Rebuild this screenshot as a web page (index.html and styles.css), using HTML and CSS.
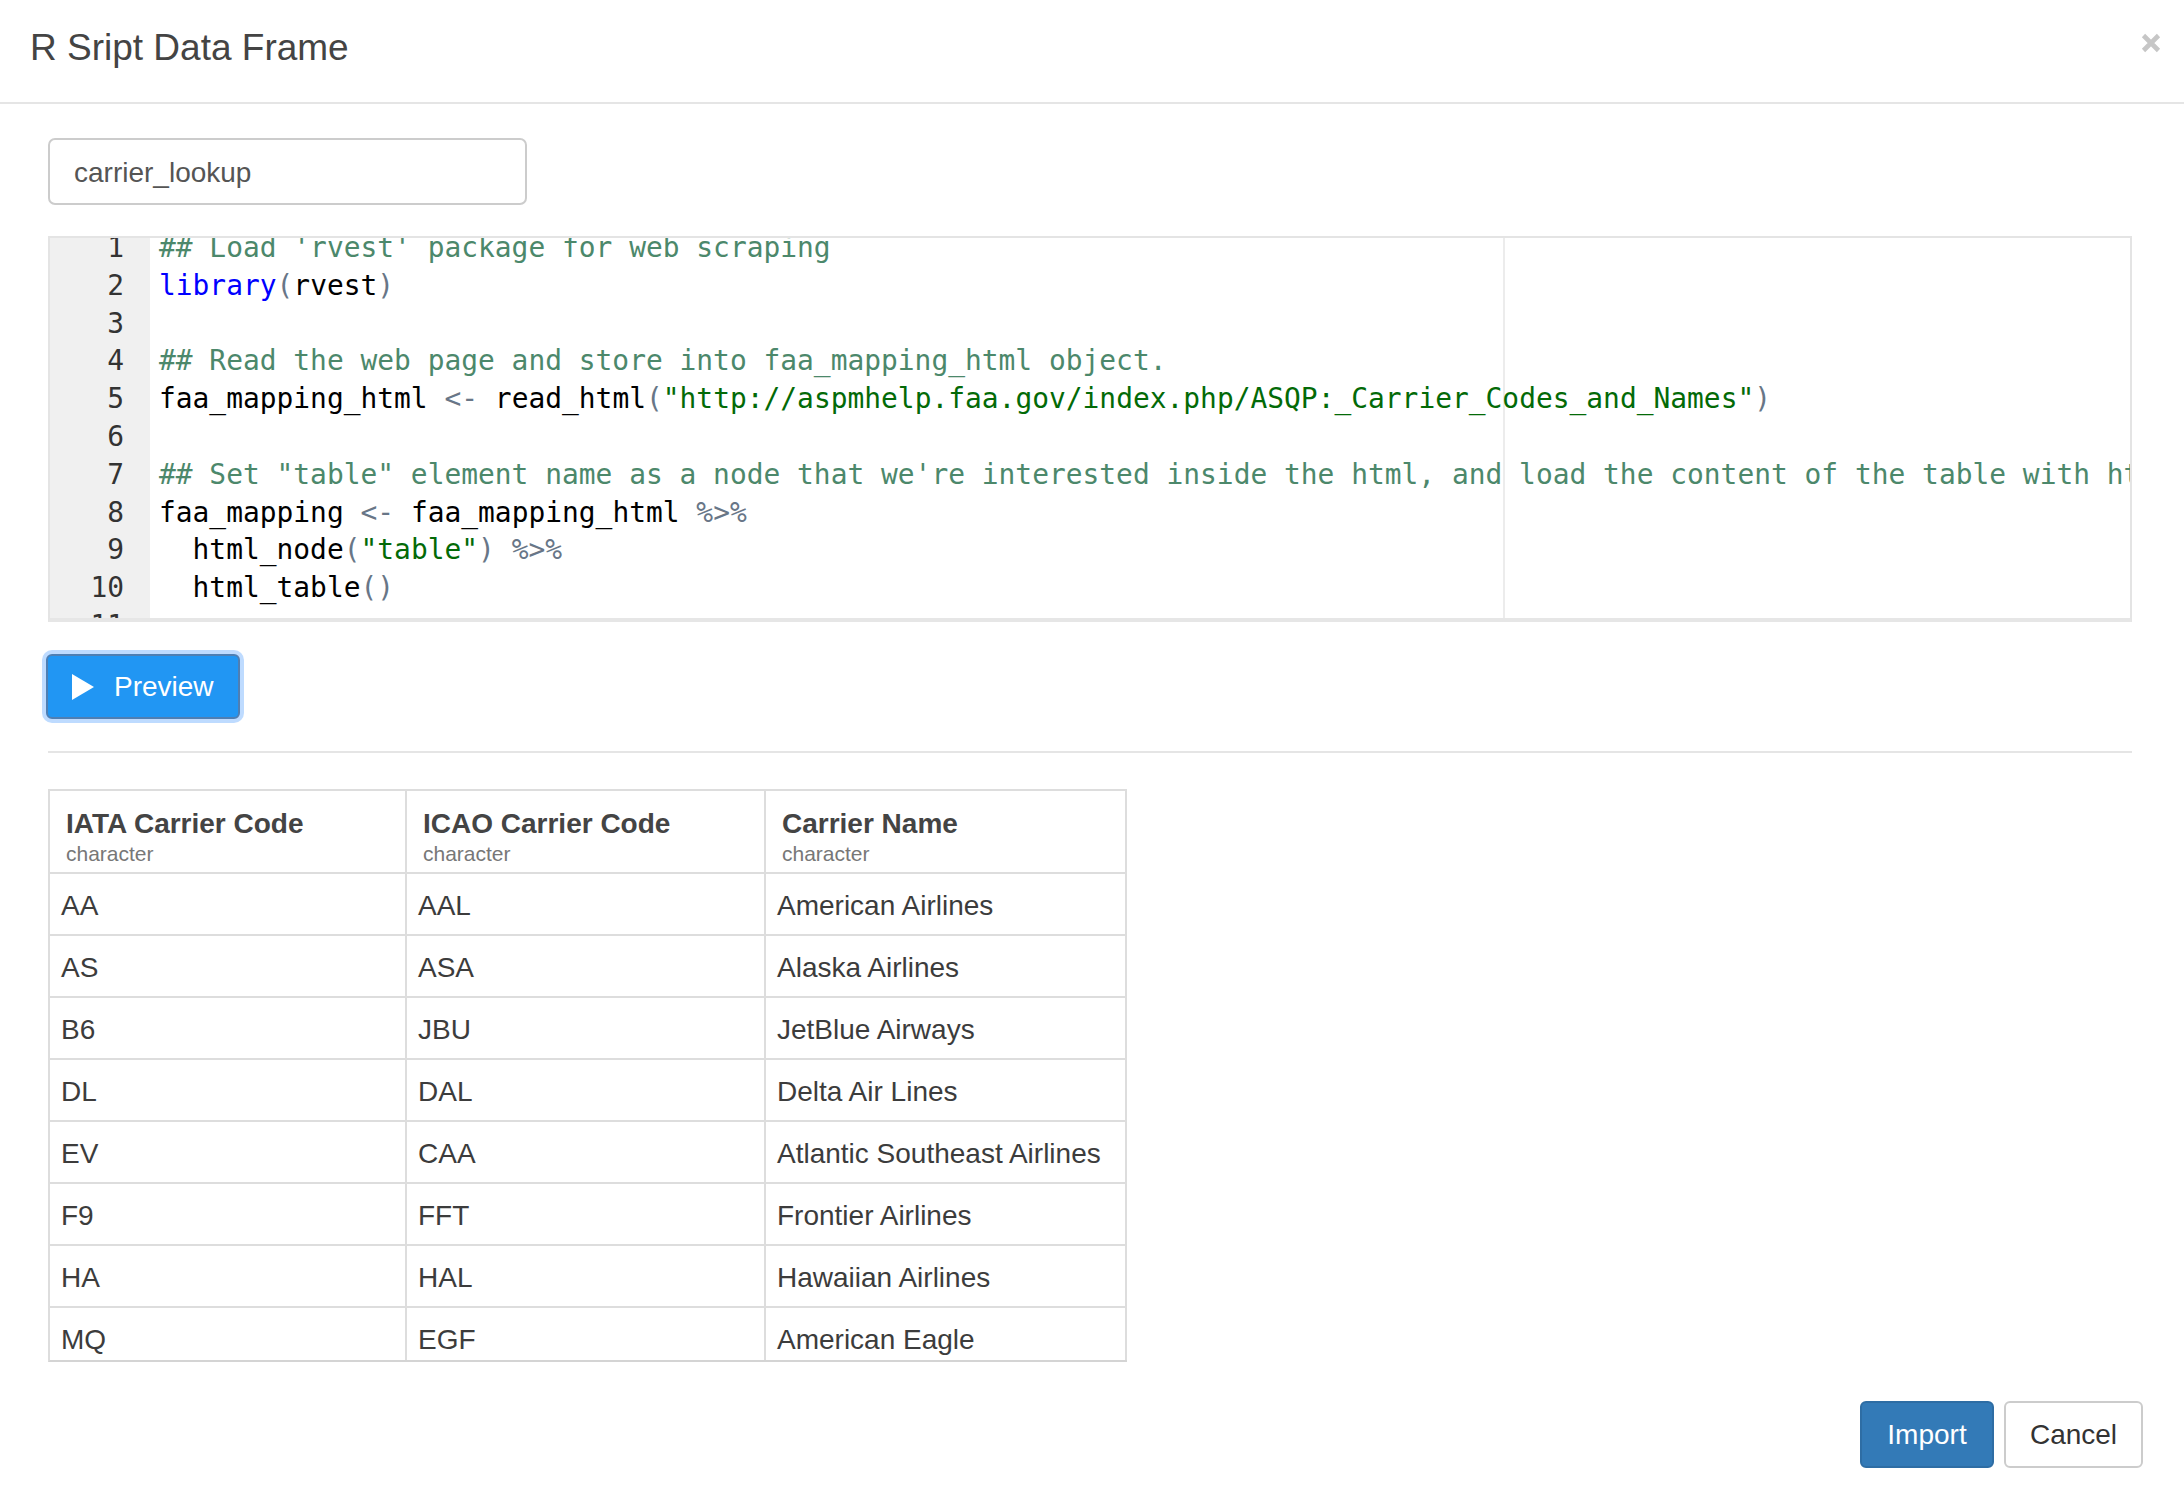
FILE: index.html
```html
<!DOCTYPE html>
<html lang="en">
<head>
<meta charset="utf-8">
<title>R Sript Data Frame</title>
<link rel="stylesheet" href="styles.css">
</head>
<body>
<div class="modal">
  <header class="modal-header">
    <h4 class="modal-title">R Sript Data Frame</h4>
    <button class="close" aria-label="Close">
      <svg width="20" height="20" viewBox="0 0 20 20"><path d="M2.5 2.5 L17.5 17.5 M17.5 2.5 L2.5 17.5" stroke="#c6c6c6" stroke-width="4.6" fill="none"/></svg>
    </button>
  </header>

  <div class="modal-body">
    <input class="name-input" type="text" value="carrier_lookup">

    <div class="editor">
      <div class="gutter">
        <div class="gutter-lines">
          <div class="gl">1</div><div class="gl">2</div><div class="gl">3</div><div class="gl">4</div><div class="gl">5</div><div class="gl">6</div><div class="gl">7</div><div class="gl">8</div><div class="gl">9</div><div class="gl">10</div><div class="gl">11</div><div class="gl">12</div>
        </div>
      </div>
      <div class="code">
        <div class="print-margin"></div>
        <div class="lines">
          <div class="ln"><span class="c">## Load 'rvest' package for web scraping</span></div>
          <div class="ln"><span class="k">library</span><span class="p">(</span>rvest<span class="p">)</span></div>
          <div class="ln"> </div>
          <div class="ln"><span class="c">## Read the web page and store into faa_mapping_html object.</span></div>
          <div class="ln">faa_mapping_html <span class="p">&lt;-</span> read_html<span class="p">(</span><span class="s">"http://aspmhelp.faa.gov/index.php/ASQP:_Carrier_Codes_and_Names"</span><span class="p">)</span></div>
          <div class="ln"> </div>
          <div class="ln"><span class="c">## Set "table" element name as a node that we're interested inside the html, and load the content of the table with html_table() function.</span></div>
          <div class="ln">faa_mapping <span class="p">&lt;-</span> faa_mapping_html <span class="p">%&gt;%</span></div>
          <div class="ln">  html_node<span class="p">(</span><span class="s">"table"</span><span class="p">)</span> <span class="p">%&gt;%</span></div>
          <div class="ln">  html_table<span class="p">()</span></div>
          <div class="ln"> </div>
          <div class="ln"> </div>
        </div>
      </div>
    </div>

    <button class="btn-preview">
      <svg width="22" height="26" viewBox="0 0 22 26"><polygon points="0,0 22,13 0,26" fill="#ffffff"/></svg>
      <span>Preview</span>
    </button>

    <hr class="sep">

    <div class="grid-wrap">
      <div class="grid">
        <div class="th"><div class="th-name">IATA Carrier Code</div><div class="th-type">character</div></div>
        <div class="th"><div class="th-name">ICAO Carrier Code</div><div class="th-type">character</div></div>
        <div class="th"><div class="th-name">Carrier Name</div><div class="th-type">character</div></div>

        <div class="td">AA</div><div class="td">AAL</div><div class="td">American Airlines</div>
        <div class="td">AS</div><div class="td">ASA</div><div class="td">Alaska Airlines</div>
        <div class="td">B6</div><div class="td">JBU</div><div class="td">JetBlue Airways</div>
        <div class="td">DL</div><div class="td">DAL</div><div class="td">Delta Air Lines</div>
        <div class="td">EV</div><div class="td">CAA</div><div class="td">Atlantic Southeast Airlines</div>
        <div class="td">F9</div><div class="td">FFT</div><div class="td">Frontier Airlines</div>
        <div class="td">HA</div><div class="td">HAL</div><div class="td">Hawaiian Airlines</div>
        <div class="td">MQ</div><div class="td">EGF</div><div class="td">American Eagle</div>
        <div class="td">OO</div><div class="td">SKW</div><div class="td">SkyWest Airlines</div>
      </div>
    </div>
  </div>

  <footer class="modal-footer">
    <button class="btn btn-primary">Import</button>
    <button class="btn btn-default">Cancel</button>
  </footer>
</div>
</body>
</html>
```

FILE: styles.css
```css
* { box-sizing: border-box; }

html, body {
  margin: 0;
  padding: 0;
  background: #ffffff;
}

body {
  font-family: "Liberation Sans", Arial, Helvetica, sans-serif;
  color: #333333;
  width: 2184px;
  height: 1490px;
  overflow: hidden;
}

.modal {
  display: flex;
  flex-direction: column;
}

/* Header */
.modal-header {
  height: 104px;
  border-bottom: 2px solid #e5e5e5;
  display: flex;
  justify-content: space-between;
  align-items: flex-start;
  padding: 0 23px 0 30px;
}

.modal-title {
  margin: 0;
  padding-top: 27px;
  font-size: 37px;
  line-height: 42px;
  font-weight: normal;
  color: #444444;
}

.close {
  margin-top: 33px;
  width: 20px;
  height: 20px;
  padding: 0;
  border: 0;
  background: transparent;
  display: flex;
}

/* Body */
.modal-body {
  display: flex;
  flex-direction: column;
  align-items: flex-start;
  padding: 0 52px 0 48px;
}

.name-input {
  margin-top: 34px;
  width: 479px;
  height: 67px;
  border: 2px solid #cccccc;
  border-radius: 7px;
  padding: 2px 0 0 24px;
  font-family: "Liberation Sans", Arial, sans-serif;
  font-size: 28px;
  color: #555555;
  background: #ffffff;
  outline: none;
}

/* Code editor */
.editor {
  margin-top: 31px;
  width: 100%;
  height: 386px;
  border-top: 2px solid #e4e4e4;
  border-left: 2px solid #e4e4e4;
  border-right: 2px solid #e4e4e4;
  border-bottom: 4px solid #e6e6e6;
  display: flex;
  overflow: hidden;
  font-family: "DejaVu Sans Mono", "Liberation Mono", monospace;
  font-size: 27.9px;
  line-height: 37.8px;
}

.gutter {
  width: 100px;
  flex: none;
  background: #f0f0f0;
  overflow: hidden;
}

.gutter-lines {
  margin-top: -9px;
}

.gl {
  height: 37.8px;
  text-align: right;
  padding-right: 26px;
  color: #333333;
}

.code {
  flex: 1;
  position: relative;
  overflow: hidden;
  padding-left: 9px;
}

.print-margin {
  position: absolute;
  top: 0;
  bottom: 0;
  left: 1353px;
  width: 2px;
  background: #ececec;
}

.lines {
  position: relative;
  margin-top: -9px;
  color: #000000;
}

.ln {
  height: 37.8px;
  white-space: pre;
}

.c { color: #4c886b; }
.k { color: #0000ff; }
.p { color: #687687; }
.s { color: #036a07; }

/* Preview button */
.btn-preview {
  margin-top: 32px;
  margin-left: -2px;
  width: 194px;
  height: 65px;
  display: flex;
  align-items: center;
  gap: 20px;
  padding: 0 0 0 24px;
  background: #2196f3;
  border: 2px solid #4f7fb3;
  border-radius: 6px;
  box-shadow: 0 0 0 4px rgba(110, 175, 255, 0.45);
  color: #ffffff;
  font-family: "Liberation Sans", Arial, sans-serif;
  font-size: 28px;
}

.btn-preview svg { flex: none; }

.sep {
  margin: 32px 0 0 0;
  width: 100%;
  height: 2px;
  border: 0;
  background: #e5e5e5;
}

/* Data grid */
.grid-wrap {
  margin-top: 36px;
  height: 573px;
  border-top: 2px solid #dddddd;
  border-left: 2px solid #dddddd;
  border-bottom: 2px solid #d4d4d4;
  overflow: hidden;
}

.grid {
  display: grid;
  grid-template-columns: 357px 359px 361px;
}

.th {
  height: 83px;
  border-right: 2px solid #dddddd;
  border-bottom: 2px solid #dddddd;
  padding: 17px 12px 0 16px;
}

.th-name {
  font-size: 28px;
  line-height: 32px;
  font-weight: bold;
  color: #444444;
}

.th-type {
  font-size: 21px;
  line-height: 28px;
  color: #777777;
}

.td {
  height: 62px;
  border-right: 2px solid #dddddd;
  border-bottom: 2px solid #dddddd;
  padding: 3px 11px 0;
  display: flex;
  align-items: center;
  font-size: 28px;
  color: #3c3c3c;
  white-space: nowrap;
}

/* Footer */
.modal-footer {
  margin-top: 39px;
  display: flex;
  justify-content: flex-end;
  gap: 10px;
  padding-right: 41px;
}

.btn {
  height: 67px;
  border-radius: 6px;
  font-family: "Liberation Sans", Arial, sans-serif;
  font-size: 28px;
  padding: 0;
  display: flex;
  align-items: center;
  justify-content: center;
}

.btn-primary {
  width: 134px;
  background: #337ab7;
  border: 2px solid #2e6da4;
  color: #ffffff;
}

.btn-default {
  width: 139px;
  background: #ffffff;
  border: 2px solid #cccccc;
  color: #333333;
}
```
